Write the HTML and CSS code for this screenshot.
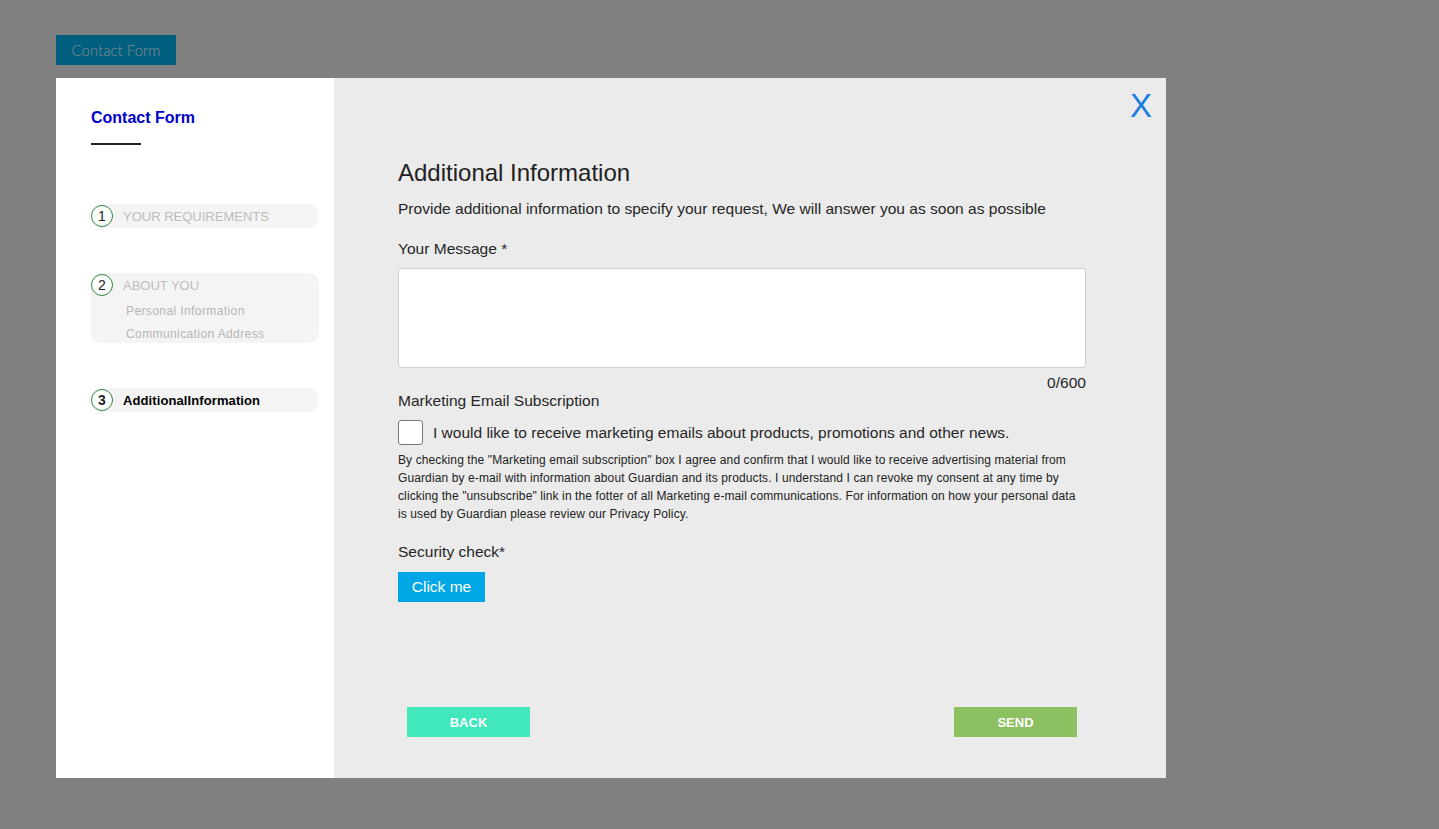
FILE: index.html
```html
<!DOCTYPE html>
<html>
<head>
<meta charset="utf-8">
<link rel="stylesheet" href="styles.css">
</head>
<body>
<div class="page">
  <button class="open-btn">Contact Form</button>
  <div class="modal">
    <aside class="side">
      <div class="side-title">Contact Form</div>
      <div class="side-rule"></div>
      <div class="step step-one">
        <div class="step-head"><span class="num">1</span><span class="step-label">YOUR REQUIREMENTS</span></div>
      </div>
      <div class="step step-two">
        <div class="step-head"><span class="num">2</span><span class="step-label">ABOUT YOU</span></div>
        <div class="subs">
          <div class="sub">Personal Information</div>
          <div class="sub">Communication Address</div>
        </div>
      </div>
      <div class="step step-three">
        <div class="step-head"><span class="num">3</span><span class="step-label active">AdditionalInformation</span></div>
      </div>
    </aside>
    <main class="main">
      <div class="close">X</div>
      <div class="content">
        <h1 class="title">Additional Information</h1>
        <p class="desc">Provide additional information to specify your request, We will answer you as soon as possible</p>
        <div class="label">Your Message *</div>
        <div class="textarea"></div>
        <div class="counter">0/600</div>
        <div class="label sub-label">Marketing Email Subscription</div>
        <div class="check-row"><span class="checkbox"></span><span class="check-text">I would like to receive marketing emails about products, promotions and other news.</span></div>
        <p class="legal">By checking the "Marketing email subscription" box I agree and confirm that I would like to receive advertising material from Guardian by e-mail with information about Guardian and its products. I understand I can revoke my consent at any time by clicking the "unsubscribe" link in the fotter of all Marketing e-mail communications. For information on how your personal data is used by Guardian please review our Privacy Policy.</p>
        <div class="label sec-label">Security check*</div>
        <button class="click-btn">Click me</button>
      </div>
      <div class="actions">
        <button class="act back">BACK</button>
        <button class="act send">SEND</button>
      </div>
    </main>
  </div>
</div>
</body>
</html>
```
FILE: styles.css
```css
html, body {
  margin: 0;
  padding: 0;
  background: #808080;
  height: 100%;
}
body {
  font-family: "Liberation Sans", Arial, sans-serif;
  color: #222;
}
.page {
  padding: 35px 0 0 56px;
}
.open-btn {
  display: block;
  width: 120px;
  height: 30px;
  background: #005f7f;
  border: none;
  color: #878c90;
  font-family: Lato, "Open Sans", sans-serif;
  font-weight: 300;
  font-size: 15px;
  padding: 0;
  margin: 0 0 13px 0;
}
.modal {
  width: 1110px;
  height: 700px;
  display: flex;
}
.side {
  width: 278px;
  background: #fff;
  padding: 30px 15px 0 35px;
  box-sizing: border-box;
}
.side-title {
  color: #0000cc;
  font-weight: bold;
  font-size: 16px;
  line-height: 20px;
}
.side-rule {
  width: 50px;
  height: 2px;
  background: #222;
  margin-top: 15px;
  margin-bottom: 59px;
}
.step {
  background: #f4f4f4;
  border-radius: 10px;
  width: 228px;
}
.step-head {
  display: flex;
  align-items: center;
  height: 24px;
}
.num {
  width: 20px;
  height: 20px;
  border: 1.5px solid #2e8b3a;
  border-radius: 50%;
  display: flex;
  align-items: center;
  justify-content: center;
  font-size: 14px;
  color: #222;
  margin-right: 10px;
  flex-shrink: 0;
  background: #fff;
}
.step-label {
  font-size: 13px;
  color: #bdbdbd;
}
.step-label.active {
  color: #000;
  font-weight: bold;
  letter-spacing: 0.1px;
}
.step-two {
  margin-top: 45px;
  height: 70px;
}
.subs {
  padding-top: 3px;
}
.sub {
  font-size: 12px;
  color: #b4b4b4;
  padding-left: 35px;
  line-height: 23px;
  letter-spacing: 0.4px;
}
.step-three {
  margin-top: 45px;
}
.step-three .num {
  font-weight: bold;
}
.main {
  flex: 1;
  background: #ebebeb;
  position: relative;
  display: flex;
  flex-direction: column;
}
.close {
  position: absolute;
  right: 14px;
  top: 11px;
  color: #1a7ee0;
  font-size: 33px;
  line-height: 34px;
}
.content {
  padding: 80px 80px 0 64px;
  flex: 1;
}
.title {
  font-weight: normal;
  font-size: 24px;
  line-height: 30px;
  margin: 0;
  color: #222;
}
.desc {
  margin: 11px 0 0 0;
  font-size: 15.55px;
  line-height: 20px;
  color: #262626;
}
.label {
  font-size: 15.55px;
  line-height: 20px;
  color: #262626;
  margin-top: 20px;
}
.textarea {
  margin-top: 9px;
  height: 98px;
  background: #fff;
  border: 1px solid #cfcfcf;
  border-radius: 3px;
}
.counter {
  text-align: right;
  font-size: 15.55px;
  line-height: 20px;
  margin-top: 5px;
  color: #262626;
}
.sub-label {
  margin-top: -2px;
}
.check-row {
  display: flex;
  align-items: center;
  margin-top: 9px;
}
.checkbox {
  width: 23px;
  height: 23px;
  background: #fff;
  border: 1px solid #777;
  border-radius: 3px;
  margin-right: 10px;
}
.check-text {
  font-size: 15.5px;
  color: #262626;
}
.legal {
  font-size: 12px;
  line-height: 18px;
  margin: 6px 0 0 0;
  color: #222;
  letter-spacing: 0.11px;
}
.sec-label {
  margin-top: 19px;
}
.click-btn {
  display: block;
  margin-top: 10px;
  width: 87px;
  height: 30px;
  background: #00a7e6;
  color: #fff;
  border: none;
  font-family: "Liberation Sans", Arial, sans-serif;
  font-size: 15.5px;
  padding: 0;
}
.actions {
  display: flex;
  justify-content: space-between;
  padding: 0 89px 41px 73px;
}
.act {
  width: 123px;
  height: 30px;
  border: none;
  color: #fff;
  font-family: "Liberation Sans", Arial, sans-serif;
  font-weight: bold;
  font-size: 13px;
  padding: 0;
}
.back {
  background: #40e8bb;
}
.send {
  background: #8dc060;
}
```
